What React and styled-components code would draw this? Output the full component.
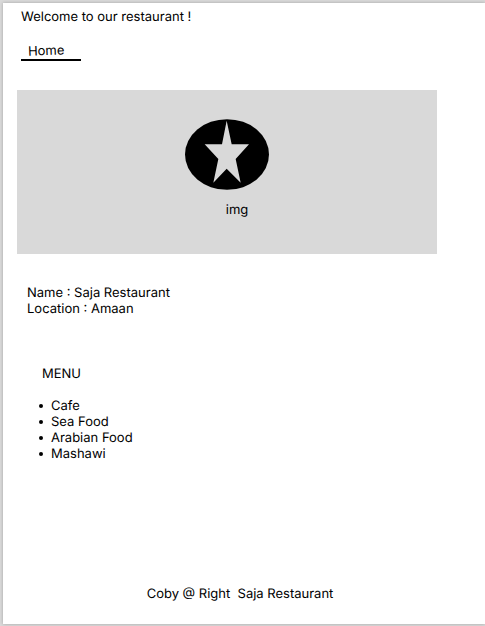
import React from "react";
import styled, { createGlobalStyle } from "styled-components";

const GlobalStyle = createGlobalStyle`
  *, *::before, *::after { box-sizing: border-box; }
  body {
    margin: 0;
    background: #d9d9d9;
    color: #000;
    font: 400 13px/16px Inter, "Liberation Sans", sans-serif;
    text-rendering: geometricPrecision;
  }
`;

const Shell = styled.div`
  display: flex;
  min-height: 100vh;
  padding: 3px 0 2px 3px;
`;

const Page = styled.div`
  flex: 1;
  display: flex;
  flex-direction: column;
  background: #fff;
  box-shadow: 0 0 3px rgba(0, 0, 0, 0.25);
`;

const Header = styled.header`
  padding: 6px 18px 0;
`;

const Title = styled.h1`
  margin: 0;
  font-size: 13px;
  font-weight: inherit;
`;

const Nav = styled.nav`
  display: flex;
  margin-top: 18px;
`;

const NavLink = styled.a`
  width: 60px;
  padding: 0 7px;
  border-bottom: 2px solid #000;
  color: inherit;
  text-decoration: none;
`;

const Tilted = styled.span`
  display: inline-block;
  transform: rotate(-2deg);
`;

const Main = styled.main`
  flex: 1;
`;

const Banner = styled.figure`
  display: flex;
  flex-direction: column;
  align-items: center;
  gap: 12px;
  margin: 29px 48px 0 14px;
  padding: 29px 0 36px;
  background: #d9d9d9;
`;

const Caption = styled.figcaption`
  padding-left: 20px;
`;

const Details = styled.section`
  padding: 31px 24px 0;
`;

const Detail = styled.p`
  margin: 0;
`;

const Menu = styled.section`
  padding: 49px 39px 0;
`;

const MenuTitle = styled.h2`
  margin: 0 0 16px;
  font-size: 13px;
  font-weight: inherit;
`;

const MenuList = styled.ul`
  margin: 0 0 0 -3px;
  padding: 0;
  list-style: none;
`;

const MenuItem = styled.li`
  display: flex;
  align-items: center;
  gap: 8px;

  &::before {
    content: "";
    width: 4px;
    height: 4px;
    border-radius: 50%;
    background: #000;
  }
`;

const Footer = styled.footer`
  padding: 0 8px 22px 0;
  text-align: center;
  white-space: pre-wrap;
`;

const dishes = ["Cafe", "Sea Food", "Arabian Food", "Mashawi"];

function StarLogo() {
  return (
    <svg width="84" height="71" viewBox="0 0 252 213" aria-hidden="true">
      <ellipse cx="126" cy="106.5" rx="126" ry="106" />
      <path
        fill="#d9d9d9"
        d="M125 5L140 76H192L152 120L167 191L125 149L85 191L100 120L59 76H111Z"
      />
    </svg>
  );
}

export default function App() {
  return (
    <>
      <GlobalStyle />
      <Shell>
        <Page>
          <Header>
            <Title>Welcome to our restaurant !</Title>
            <Nav>
              <NavLink href="#home">
                <Tilted>Home</Tilted>
              </NavLink>
            </Nav>
          </Header>
          <Main id="home">
            <Banner>
              <StarLogo />
              <Caption>img</Caption>
            </Banner>
            <Details>
              <Detail>Name : Saja Restaurant</Detail>
              <Detail>Location : Amaan</Detail>
            </Details>
            <Menu>
              <MenuTitle>MENU</MenuTitle>
              <MenuList>
                {dishes.map((dish) => (
                  <MenuItem key={dish}>{dish}</MenuItem>
                ))}
              </MenuList>
            </Menu>
          </Main>
          <Footer>{"Coby @ Right  Saja Restaurant"}</Footer>
        </Page>
      </Shell>
    </>
  );
}
